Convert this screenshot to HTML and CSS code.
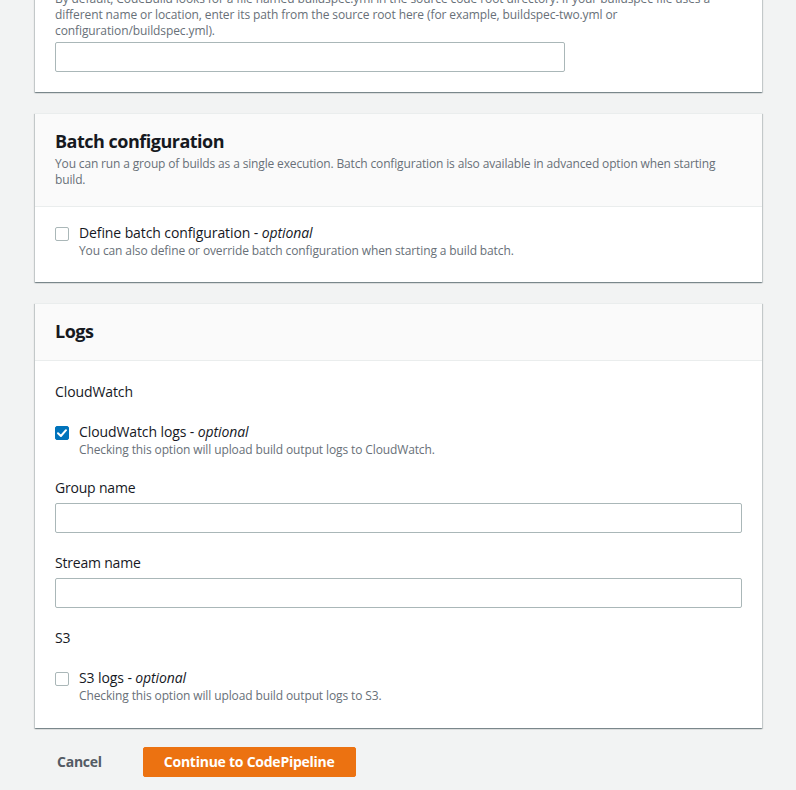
FILE: index.html
```html
<!DOCTYPE html>
<html lang="en">
<head>
<meta charset="utf-8">
<title>Create build project</title>
<link rel="stylesheet" href="styles.css">
</head>
<body>
<main class="page">
  <section class="card card-first">
    <div class="card-body">
      <p class="hint">By default, CodeBuild looks for a file named buildspec.yml in the source code root directory. If your buildspec file uses a different name or location, enter its path from the source root here (for example, buildspec-two.yml or configuration/buildspec.yml).</p>
      <input class="text-input input-narrow" type="text">
    </div>
  </section>

  <section class="card">
    <header class="card-header">
      <h2 class="card-title">Batch configuration</h2>
      <p class="card-desc">You can run a group of builds as a single execution. Batch configuration is also available in advanced option when starting build.</p>
    </header>
    <div class="card-body body-batch">
      <label class="check">
        <span class="box"></span>
        <span class="check-text">
          <span class="check-label">Define batch configuration - <i>optional</i></span>
          <span class="check-desc">You can also define or override batch configuration when starting a build batch.</span>
        </span>
      </label>
    </div>
  </section>

  <section class="card">
    <header class="card-header">
      <h2 class="card-title">Logs</h2>
    </header>
    <div class="card-body body-logs">
      <h3 class="group-title">CloudWatch</h3>
      <label class="check">
        <span class="box box-checked">
          <svg viewBox="0 0 14 14" width="14" height="14"><path d="M3 7.2 L5.9 10 L11 4.2" fill="none" stroke="#fff" stroke-width="2" stroke-linecap="round" stroke-linejoin="round"/></svg>
        </span>
        <span class="check-text">
          <span class="check-label">CloudWatch logs - <i>optional</i></span>
          <span class="check-desc">Checking this option will upload build output logs to CloudWatch.</span>
        </span>
      </label>
      <div class="field">
        <span class="field-label">Group name</span>
        <input class="text-input" type="text">
      </div>
      <div class="field">
        <span class="field-label">Stream name</span>
        <input class="text-input" type="text">
      </div>
      <h3 class="group-title">S3</h3>
      <label class="check">
        <span class="box"></span>
        <span class="check-text">
          <span class="check-label">S3 logs - <i>optional</i></span>
          <span class="check-desc">Checking this option will upload build output logs to S3.</span>
        </span>
      </label>
    </div>
  </section>

  <div class="actions">
    <button class="btn-link" type="button">Cancel</button>
    <button class="btn-primary" type="button">Continue to CodePipeline</button>
  </div>
</main>
</body>
</html>
```

FILE: styles.css
```css
html, body {
  margin: 0;
  padding: 0;
}
body {
  background: #f2f3f3;
  font-family: "Open Sans", "Noto Sans", sans-serif;
  color: #16191f;
  font-size: 14px;
  line-height: 22px;
}
.page {
  padding: 0 34px 6px 35px;
}
.card {
  background: #fff;
  border-top: 1px solid #eaeded;
  box-shadow: 0 1px 1px 0 rgba(0, 28, 36, 0.3), 1px 1px 1px 0 rgba(0, 28, 36, 0.15), -1px 1px 1px 0 rgba(0, 28, 36, 0.15);
  margin-bottom: 21px;
}
.card-first {
  margin-top: -30px;
}
.card-body {
  padding: 20px;
}
.hint {
  margin: 0;
  font-size: 12px;
  line-height: 16px;
  letter-spacing: -0.1px;
  color: #687078;
}
.text-input {
  display: block;
  box-sizing: border-box;
  width: 100%;
  height: 30px;
  margin: 0;
  border: 1px solid #aab7b8;
  border-radius: 2px;
  background: #fff;
  font: inherit;
}
.input-narrow {
  width: 510px;
  margin-top: 3px;
}
.card-header {
  background: #fafafa;
  border-bottom: 1px solid #eaeded;
  padding: 16px 20px 18px;
}
.card-title {
  margin: 0;
  font-size: 18px;
  line-height: 22px;
  font-weight: 700;
  letter-spacing: -0.5px;
  color: #16191f;
}
.card-desc {
  margin: 4px 0 0;
  font-size: 12px;
  line-height: 16px;
  letter-spacing: -0.15px;
  color: #687078;
}
.body-batch {
  padding: 16px 20px 23px;
}
.body-logs {
  padding: 20px 20px 24px;
  display: flex;
  flex-direction: column;
  gap: 19px;
}
.group-title {
  margin: 0;
  font-size: 14px;
  line-height: 22px;
  font-weight: 400;
  letter-spacing: -0.1px;
}
.check {
  display: flex;
  align-items: flex-start;
  gap: 10px;
}
.box {
  flex: none;
  box-sizing: border-box;
  width: 14px;
  height: 14px;
  margin-top: 4px;
  border: 1px solid #aab7b8;
  border-radius: 2px;
  background: #fff;
  display: flex;
}
.box-checked {
  border-color: #0073bb;
  background: #0073bb;
}
.box-checked svg {
  margin: -1px;
}
.check-text {
  display: flex;
  flex-direction: column;
}
.check-label {
  font-size: 14px;
  line-height: 20px;
  letter-spacing: -0.1px;
}
.check-desc {
  font-size: 12px;
  line-height: 16px;
  letter-spacing: -0.12px;
  color: #687078;
}
.field {
  display: flex;
  flex-direction: column;
  gap: 4px;
}
.field-label {
  font-size: 14px;
  line-height: 22px;
  letter-spacing: -0.2px;
}
.actions {
  display: flex;
  align-items: center;
  gap: 20px;
  margin-top: -2px;
}
.btn-link,
.btn-primary {
  font-family: inherit;
  font-size: 14px;
  font-weight: 700;
  line-height: 22px;
  letter-spacing: -0.25px;
  border: 1px solid transparent;
  border-radius: 2px;
  padding: 3px 20px;
  background: transparent;
  cursor: pointer;
}
.btn-link {
  color: #545b64;
  margin-left: 1px;
}
.btn-primary {
  background: #ec7211;
  border-color: #ec7211;
  color: #fff;
}
```
